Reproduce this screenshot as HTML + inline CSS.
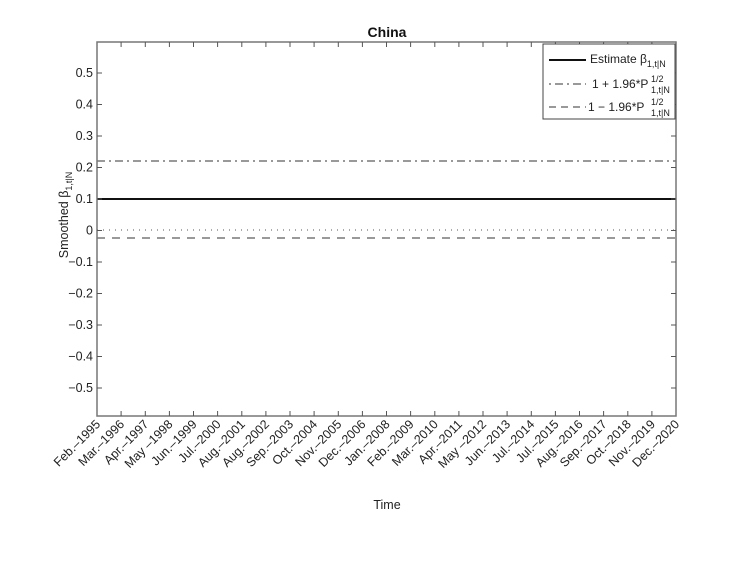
<!DOCTYPE html>
<html><head><meta charset="utf-8"><style>
html,body{margin:0;padding:0;background:#fff;}
svg{display:block;font-family:"Liberation Sans",sans-serif;}
</style></head><body>
<svg width="747" height="561" viewBox="0 0 747 561" xmlns="http://www.w3.org/2000/svg">
<rect width="747" height="561" fill="#fff"/>
<line x1="97" y1="161" x2="676" y2="161" stroke="#333" stroke-width="1" stroke-dasharray="8,4,2,4"/>
<line x1="97" y1="199" x2="676" y2="199" stroke="#111" stroke-width="2"/>
<line x1="97" y1="230" x2="676" y2="230" stroke="#555" stroke-width="1" stroke-dasharray="1,5"/>
<line x1="97" y1="238" x2="676" y2="238" stroke="#333" stroke-width="1" stroke-dasharray="8,7"/>
<rect x="97" y="42" width="579" height="374" fill="none" stroke="#777" stroke-width="1.5"/>
<g stroke="#555" stroke-width="1">
<path d="M97 73h5M97 104.5h5M97 136h5M97 167.5h5M97 199h5M97 230.5h5M97 262h5M97 293.5h5M97 325h5M97 356.5h5M97 388h5"/>
<path d="M676 73h-5M676 104.5h-5M676 136h-5M676 167.5h-5M676 199h-5M676 230.5h-5M676 262h-5M676 293.5h-5M676 325h-5M676 356.5h-5M676 388h-5"/>
<path d="M121.1 416v-5M145.3 416v-5M169.4 416v-5M193.5 416v-5M217.6 416v-5M241.8 416v-5M265.9 416v-5M290 416v-5M314.1 416v-5M338.3 416v-5M362.4 416v-5M386.5 416v-5M410.6 416v-5M434.8 416v-5M458.9 416v-5M483 416v-5M507.1 416v-5M531.3 416v-5M555.4 416v-5M579.5 416v-5M603.6 416v-5M627.8 416v-5M651.9 416v-5"/>
<path d="M121.1 42v5M145.3 42v5M169.4 42v5M193.5 42v5M217.6 42v5M241.8 42v5M265.9 42v5M290 42v5M314.1 42v5M338.3 42v5M362.4 42v5M386.5 42v5M410.6 42v5M434.8 42v5M458.9 42v5M483 42v5M507.1 42v5M531.3 42v5M555.4 42v5M579.5 42v5M603.6 42v5M627.8 42v5M651.9 42v5"/>
</g>
<g font-size="12.5" text-anchor="end" fill="#222">
<text x="93" y="77">0.5</text><text x="93" y="108.5">0.4</text><text x="93" y="140">0.3</text><text x="93" y="171.5">0.2</text><text x="93" y="203">0.1</text><text x="93" y="234.5">0</text><text x="93" y="266">−0.1</text><text x="93" y="297.5">−0.2</text><text x="93" y="329">−0.3</text><text x="93" y="360.5">−0.4</text><text x="93" y="392">−0.5</text>
</g>
<g font-size="12.5" text-anchor="end" fill="#222">
<text transform="translate(101,425) rotate(-45)">Feb.–1995</text>
<text transform="translate(125.1,425) rotate(-45)">Mar.–1996</text>
<text transform="translate(149.3,425) rotate(-45)">Apr.–1997</text>
<text transform="translate(173.4,425) rotate(-45)">May –1998</text>
<text transform="translate(197.5,425) rotate(-45)">Jun.–1999</text>
<text transform="translate(221.6,425) rotate(-45)">Jul.–2000</text>
<text transform="translate(245.8,425) rotate(-45)">Aug.–2001</text>
<text transform="translate(269.9,425) rotate(-45)">Aug.–2002</text>
<text transform="translate(294,425) rotate(-45)">Sep.–2003</text>
<text transform="translate(318.1,425) rotate(-45)">Oct.–2004</text>
<text transform="translate(342.3,425) rotate(-45)">Nov.–2005</text>
<text transform="translate(366.4,425) rotate(-45)">Dec.–2006</text>
<text transform="translate(390.5,425) rotate(-45)">Jan.–2008</text>
<text transform="translate(414.6,425) rotate(-45)">Feb.–2009</text>
<text transform="translate(438.8,425) rotate(-45)">Mar.–2010</text>
<text transform="translate(462.9,425) rotate(-45)">Apr.–2011</text>
<text transform="translate(487,425) rotate(-45)">May –2012</text>
<text transform="translate(511.1,425) rotate(-45)">Jun.–2013</text>
<text transform="translate(535.3,425) rotate(-45)">Jul.–2014</text>
<text transform="translate(559.4,425) rotate(-45)">Jul.–2015</text>
<text transform="translate(583.5,425) rotate(-45)">Aug.–2016</text>
<text transform="translate(607.6,425) rotate(-45)">Sep.–2017</text>
<text transform="translate(631.8,425) rotate(-45)">Oct.–2018</text>
<text transform="translate(655.9,425) rotate(-45)">Nov.–2019</text>
<text transform="translate(680,425) rotate(-45)">Dec.–2020</text>
</g>
<text x="387" y="37" font-size="14" font-weight="bold" text-anchor="middle" fill="#111">China</text>
<text x="387" y="509" font-size="12.5" text-anchor="middle" fill="#222">Time</text>
<text transform="translate(68,215) rotate(-90)" font-size="12.5" text-anchor="middle" fill="#222">Smoothed β<tspan font-size="9" dy="4">1,t|N</tspan></text>
<rect x="543" y="44" width="132" height="75" fill="#fff" stroke="#444" stroke-width="1"/>
<line x1="549" y1="60" x2="586" y2="60" stroke="#111" stroke-width="2"/>
<text x="590" y="63" font-size="12" fill="#222">Estimate β<tspan font-size="9" dy="4">1,t|N</tspan></text>
<line x1="549" y1="84" x2="586" y2="84" stroke="#333" stroke-width="1" stroke-dasharray="2,4,8,4"/>
<text x="592" y="88" font-size="12" fill="#222">1 + 1.96*P</text>
<text x="651" y="82" font-size="9" fill="#222">1/2</text>
<text x="651" y="93" font-size="9" fill="#222">1,t|N</text>
<line x1="549" y1="107" x2="586" y2="107" stroke="#333" stroke-width="1" stroke-dasharray="7,5"/>
<text x="588" y="111" font-size="12" fill="#222">1 − 1.96*P</text>
<text x="651" y="105" font-size="9" fill="#222">1/2</text>
<text x="651" y="116" font-size="9" fill="#222">1,t|N</text>
</svg>
</body></html>
